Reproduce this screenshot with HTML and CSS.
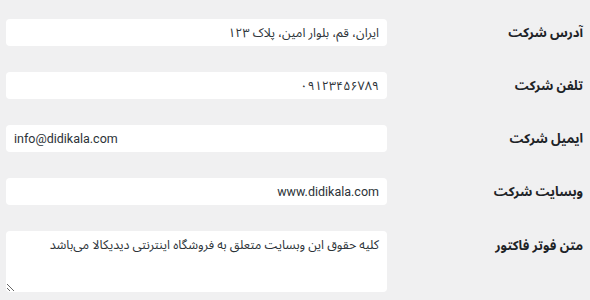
FILE: index.html
```
<!DOCTYPE html>
<html lang="fa" dir="rtl">
<head>
<meta charset="UTF-8">
<title>تنظیمات شرکت</title>
<link rel="stylesheet" href="styles.css">
</head>
<body>

<div class="settings">

    <div class="row">
        <label class="label" for="address">آدرس شرکت</label>
        <input class="field" type="text" id="address" value="ایران، قم، بلوار امین، پلاک ۱۲۳">
    </div>

    <div class="row">
        <label class="label" for="phone">تلفن شرکت</label>
        <input class="field" type="text" id="phone" value="۰۹۱۲۳۴۵۶۷۸۹">
    </div>

    <div class="row">
        <label class="label" for="email">ایمیل شرکت</label>
        <input class="field ltr" type="email" id="email" value="info@didikala.com">
    </div>

    <div class="row">
        <label class="label" for="website">وبسایت شرکت</label>
        <input class="field" type="text" id="website" value="www.didikala.com">
    </div>

    <div class="row top">
        <label class="label" for="footer">متن فوتر فاکتور</label>
        <textarea class="field area" id="footer">کلیه حقوق این وبسایت متعلق به فروشگاه اینترنتی دیدیکالا می‌باشد</textarea>
    </div>

</div>

</body>
</html>
```

FILE: styles.css
```
*{
    margin:0;
    padding:0;
    box-sizing:border-box;
}

body{
    background:#f0f0f1;
    font-family:Roboto,"Noto Sans Arabic","DejaVu Sans",sans-serif;
    direction:rtl;
    overflow:hidden;
}

.settings{
    padding:19px 7px 0 6px;
    display:flex;
    flex-direction:column;
    gap:26px;
}

.row{
    display:flex;
    align-items:center;
    height:27px;
}

.row.top{
    align-items:flex-start;
    height:61px;
}

.label{
    width:196px;
    flex-shrink:0;
    font-size:13px;
    line-height:18px;
    font-weight:bold;
    color:#1d2327;
}

.row.top .label{
    padding-top:6px;
}

.field{
    flex:1;
    height:27px;
    padding:0 8px;
    border:none;
    border-radius:4px;
    background:#fff;
    font-family:inherit;
    font-size:12.5px;
    color:#2c3338;
    outline:none;
}

.field.ltr{
    direction:ltr;
}

.area{
    height:61px;
    padding:5px 8px;
    resize:vertical;
    line-height:18px;
}
```
